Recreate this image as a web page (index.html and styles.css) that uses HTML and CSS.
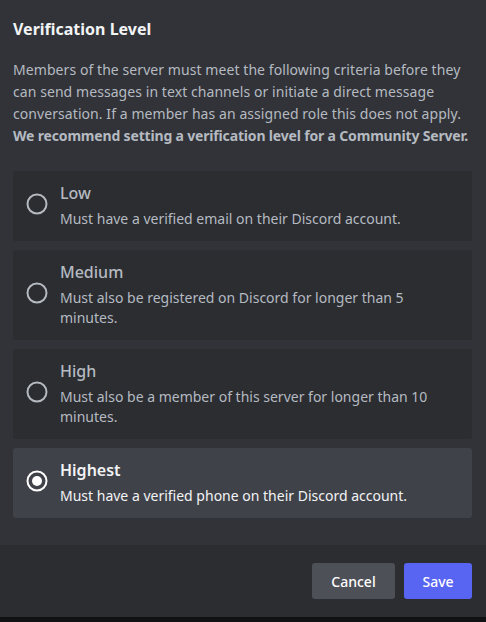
FILE: index.html
```html
<!DOCTYPE html>
<html lang="en">
<head>
<meta charset="utf-8">
<title>Verification Level</title>
<link rel="stylesheet" href="styles.css">
</head>
<body>
<div class="modal">
  <div class="content">
    <h2 class="title">Verification Level</h2>
    <p class="desc">Members of the server must meet the following criteria before they<br>can send messages in text channels or initiate a direct message<br>conversation. If a member has an assigned role this does not apply.<br><strong>We recommend setting a verification level for a Community Server.</strong></p>
    <div class="options">
      <div class="option">
        <svg class="radio" width="24" height="24" viewBox="0 0 24 24"><circle cx="12" cy="12" r="9.5" fill="none" stroke="currentColor" stroke-width="2"/></svg>
        <div class="opt-text">
          <div class="opt-title">Low</div>
          <div class="opt-desc">Must have a verified email on their Discord account.</div>
        </div>
      </div>
      <div class="option">
        <svg class="radio" width="24" height="24" viewBox="0 0 24 24"><circle cx="12" cy="12" r="9.5" fill="none" stroke="currentColor" stroke-width="2"/></svg>
        <div class="opt-text">
          <div class="opt-title">Medium</div>
          <div class="opt-desc">Must also be registered on Discord for longer than 5<br>minutes.</div>
        </div>
      </div>
      <div class="option">
        <svg class="radio" width="24" height="24" viewBox="0 0 24 24"><circle cx="12" cy="12" r="9.5" fill="none" stroke="currentColor" stroke-width="2"/></svg>
        <div class="opt-text">
          <div class="opt-title">High</div>
          <div class="opt-desc">Must also be a member of this server for longer than 10<br>minutes.</div>
        </div>
      </div>
      <div class="option selected">
        <svg class="radio" width="24" height="24" viewBox="0 0 24 24"><circle cx="12" cy="12" r="9.5" fill="none" stroke="currentColor" stroke-width="2"/><circle cx="12" cy="12" r="5" fill="currentColor"/></svg>
        <div class="opt-text">
          <div class="opt-title">Highest</div>
          <div class="opt-desc">Must have a verified phone on their Discord account.</div>
        </div>
      </div>
    </div>
  </div>
  <div class="footer">
    <button class="btn btn-cancel">Cancel</button>
    <button class="btn btn-save">Save</button>
  </div>
  <div class="bottom"></div>
</div>
</body>
</html>
```

FILE: styles.css
```css
* { box-sizing: border-box; }
html, body {
  margin: 0;
  padding: 0;
  background: #313338;
  height: 100%;
}
body {
  font-family: "Noto Sans", "Open Sans", sans-serif;
  color: #b5bac1;
}
.modal {
  display: flex;
  flex-direction: column;
  height: 622px;
}
.content {
  flex: 1;
  padding: 19px 14px 0 13px;
}
.title {
  margin: 0;
  font-size: 16px;
  line-height: 20px;
  font-weight: 700;
  color: #f2f3f5;
}
.desc {
  margin: 20px 0 0;
  font-size: 14px;
  line-height: 22px;
  color: #b5bac1;
  white-space: nowrap;
  letter-spacing: 0.07px;
}
.desc strong {
  font-weight: 700;
  color: #b5bac1;
  letter-spacing: -0.17px;
}
.options {
  margin-top: 24px;
  display: flex;
  flex-direction: column;
  gap: 9px;
}
.option {
  display: flex;
  align-items: center;
  gap: 11px;
  background: #2b2d31;
  border-radius: 3px;
  padding: 12px 16px 12px 12px;
}
.option.selected {
  background: #404249;
}
.radio {
  flex: none;
  color: #b5bac1;
  margin-bottom: 4px;
}
.selected .radio { color: #ffffff; }
.opt-title {
  font-size: 16px;
  line-height: 20px;
  font-weight: 500;
  color: #b5bac1;
}
.opt-desc {
  margin-top: 6px;
  font-size: 14px;
  line-height: 20px;
  color: #b5bac1;
}
.selected .opt-title { color: #f2f3f5; font-weight: 600; }
.selected .opt-desc { color: #f2f3f5; }
.footer {
  height: 72px;
  flex: none;
  background: #2b2d31;
  display: flex;
  justify-content: flex-end;
  align-items: center;
  gap: 9px;
  padding: 0 14px;
}
.btn {
  height: 36px;
  border: none;
  border-radius: 3px;
  font-family: inherit;
  font-size: 14px;
  font-weight: 500;
  color: #ffffff;
  padding: 0 16px;
}
.btn-cancel { background: #4e5058; width: 83px; }
.btn-save { background: #5865f2; width: 68px; }
.bottom {
  height: 5px;
  flex: none;
  background: #111214;
}
```
